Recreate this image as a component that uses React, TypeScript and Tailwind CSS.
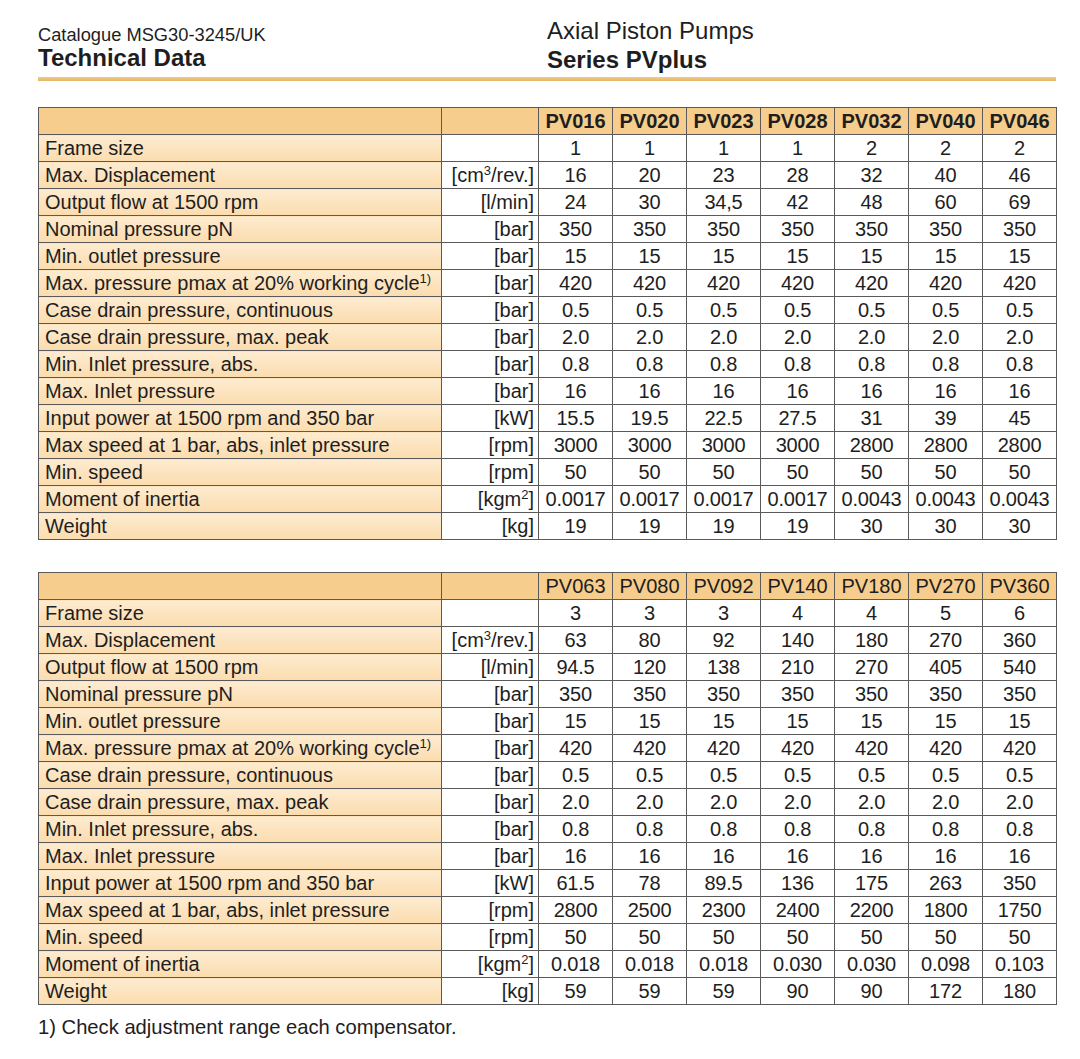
import React from "react";

// Data
type Row = { label: React.ReactNode; unit: React.ReactNode; values: string[] };

const sup = (t: string) => <sup className="text-[13px] relative -top-[7px] align-baseline leading-none">{t}</sup>;

const labels: { label: React.ReactNode; unit: React.ReactNode }[] = [
  { label: "Frame size", unit: "" },
  { label: "Max. Displacement", unit: <>[cm{sup("3")}/rev.]</> },
  { label: "Output flow at 1500 rpm", unit: "[l/min]" },
  { label: "Nominal pressure pN", unit: "[bar]" },
  { label: "Min. outlet pressure", unit: "[bar]" },
  { label: <>Max. pressure pmax at 20% working cycle{sup("1)")}</>, unit: "[bar]" },
  { label: "Case drain pressure, continuous", unit: "[bar]" },
  { label: "Case drain pressure, max. peak", unit: "[bar]" },
  { label: "Min. Inlet pressure, abs.", unit: "[bar]" },
  { label: "Max. Inlet pressure", unit: "[bar]" },
  { label: "Input power at 1500 rpm and 350 bar", unit: "[kW]" },
  { label: "Max speed at 1 bar, abs, inlet pressure", unit: "[rpm]" },
  { label: "Min. speed", unit: "[rpm]" },
  { label: "Moment of inertia", unit: <>[kgm{sup("2")}]</> },
  { label: "Weight", unit: "[kg]" },
];

const common = [
  ["350", "350", "350", "350", "350", "350", "350"],
  ["15", "15", "15", "15", "15", "15", "15"],
  ["420", "420", "420", "420", "420", "420", "420"],
  ["0.5", "0.5", "0.5", "0.5", "0.5", "0.5", "0.5"],
  ["2.0", "2.0", "2.0", "2.0", "2.0", "2.0", "2.0"],
  ["0.8", "0.8", "0.8", "0.8", "0.8", "0.8", "0.8"],
  ["16", "16", "16", "16", "16", "16", "16"],
];

const table1 = {
  models: ["PV016", "PV020", "PV023", "PV028", "PV032", "PV040", "PV046"],
  values: [
    ["1", "1", "1", "1", "2", "2", "2"],
    ["16", "20", "23", "28", "32", "40", "46"],
    ["24", "30", "34,5", "42", "48", "60", "69"],
    ...common,
    ["15.5", "19.5", "22.5", "27.5", "31", "39", "45"],
    ["3000", "3000", "3000", "3000", "2800", "2800", "2800"],
    ["50", "50", "50", "50", "50", "50", "50"],
    ["0.0017", "0.0017", "0.0017", "0.0017", "0.0043", "0.0043", "0.0043"],
    ["19", "19", "19", "19", "30", "30", "30"],
  ],
};

const table2 = {
  models: ["PV063", "PV080", "PV092", "PV140", "PV180", "PV270", "PV360"],
  values: [
    ["3", "3", "3", "4", "4", "5", "6"],
    ["63", "80", "92", "140", "180", "270", "360"],
    ["94.5", "120", "138", "210", "270", "405", "540"],
    ...common,
    ["61.5", "78", "89.5", "136", "175", "263", "350"],
    ["2800", "2500", "2300", "2400", "2200", "1800", "1750"],
    ["50", "50", "50", "50", "50", "50", "50"],
    ["0.018", "0.018", "0.018", "0.030", "0.030", "0.098", "0.103"],
    ["59", "59", "59", "90", "90", "172", "180"],
  ],
};

const cell = "border border-[#5a5a5a] h-[27px] p-0 leading-none";

const DataTable: React.FC<{ models: string[]; values: string[][]; boldHead?: boolean }> = ({
  models,
  values,
  boldHead,
}) => {
  const rows: Row[] = labels.map((l, i) => ({ ...l, values: values[i] }));
  return (
    <table className="border-collapse table-fixed w-[1018px] text-[20px] text-[#1e1e1e]">
      <colgroup>
        <col className="w-[403px]" />
        <col className="w-[97px]" />
        {models.map((m) => (
          <col key={m} className="w-[74px]" />
        ))}
      </colgroup>
      <thead>
        <tr className="bg-[#f6cd8c]">
          <th className={cell} />
          <th className={cell} />
          {models.map((m) => (
            <th key={m} className={`${cell} text-center ${boldHead ? "font-bold" : "font-normal"}`}>
              {m}
            </th>
          ))}
        </tr>
      </thead>
      <tbody>
        {rows.map((r, i) => (
          <tr key={i}>
            <td className={`${cell} bg-gradient-to-b from-[#fdebd0] to-[#fbdcae] pl-[6px] text-left whitespace-nowrap`}>
              {r.label}
            </td>
            <td className={`${cell} bg-white text-right pr-[4px] whitespace-nowrap`}>{r.unit}</td>
            {r.values.map((v, j) => (
              <td key={j} className={`${cell} bg-white text-center whitespace-nowrap tracking-[-0.2px]`}>
                {v}
              </td>
            ))}
          </tr>
        ))}
      </tbody>
    </table>
  );
};

export default function App() {
  return (
    <div className="w-[1080px] h-[1059px] bg-white font-['Liberation_Sans',Arial,sans-serif] text-[#1e1e1e] pl-[38px]">
      {/* Header */}
      <div className="flex w-[1018px]">
        <div className="w-[509px] pt-[24px]">
          <div className="text-[18.3px] leading-[22px]">Catalogue MSG30-3245/UK</div>
          <div className="text-[24px] font-bold leading-[24px]">Technical Data</div>
        </div>
        <div className="pt-[17px]">
          <div className="text-[24px] leading-[28px]">Axial Piston Pumps</div>
          <div className="text-[24px] font-bold leading-[30px]">Series PVplus</div>
        </div>
      </div>
      <div className="mt-[2px] h-[4px] w-[1018px] bg-gradient-to-b from-[#f1cc86] to-[#e3b768]" />

      <div className="mt-[26px]">
        <DataTable models={table1.models} values={table1.values} boldHead />
      </div>
      <div className="mt-[32px]">
        <DataTable models={table2.models} values={table2.values} />
      </div>
      <div className="mt-[11px] text-[20.2px] leading-[22px]">1) Check adjustment range each compensator.</div>
    </div>
  );
}
